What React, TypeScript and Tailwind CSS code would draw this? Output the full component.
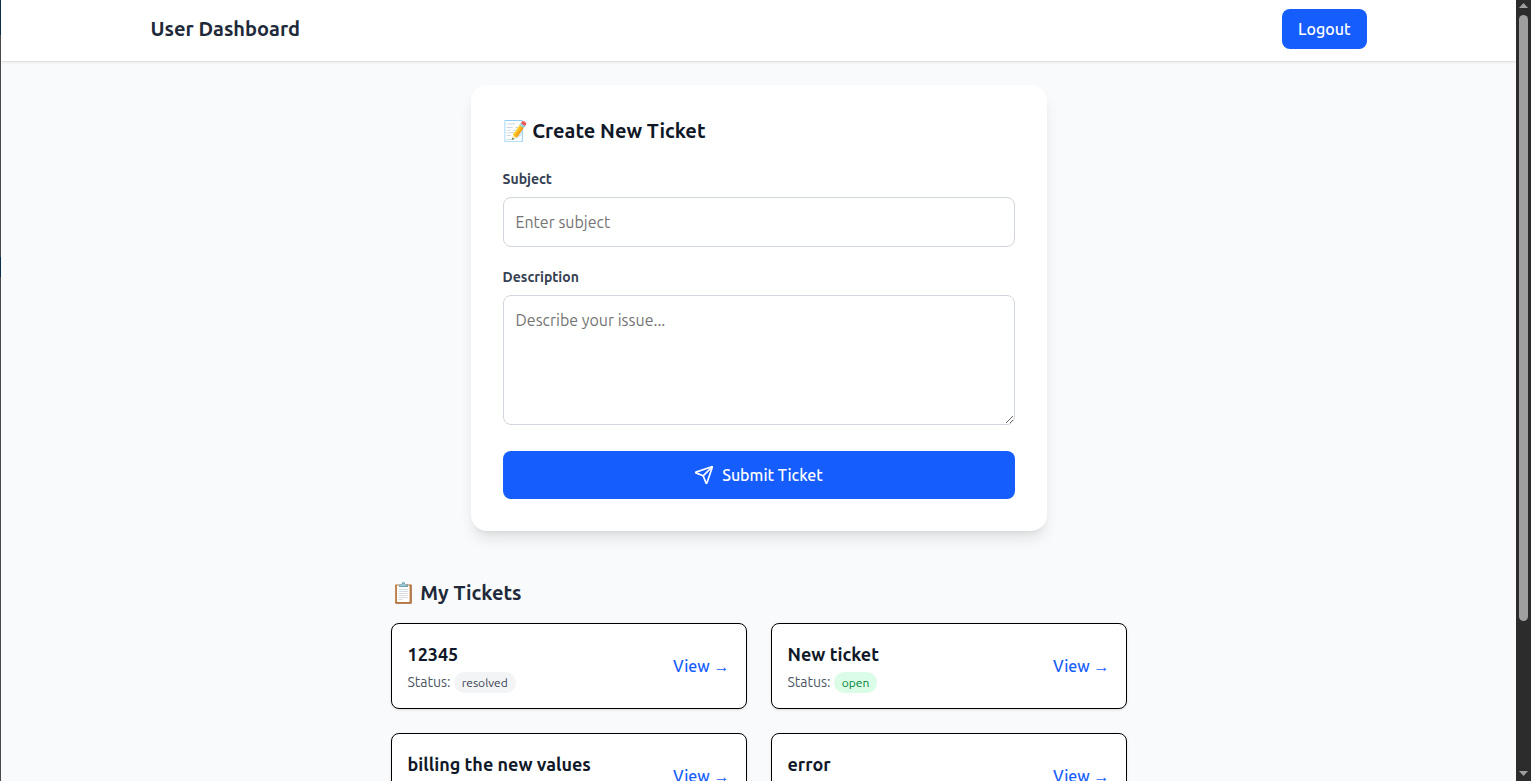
import { Send } from 'lucide-react';
import { clsx } from 'clsx';

type Ticket = { id: number; subject: string; status: 'open' | 'resolved' };

const tickets: Ticket[] = [
  { id: 1, subject: '12345', status: 'resolved' },
  { id: 2, subject: 'New ticket', status: 'open' },
  { id: 3, subject: 'billing the new values', status: 'open' },
  { id: 4, subject: 'error', status: 'open' },
];

function Header() {
  return (
    <header className="relative shrink-0 bg-white shadow-sm">
      <div className="mx-auto flex max-w-7xl items-start justify-between px-8 pt-[9px] pb-3">
        <h1 className="pt-1.5 text-xl font-semibold text-gray-800">User Dashboard</h1>
        <button type="button" className="rounded-lg bg-blue-600 px-4 py-2 font-medium text-white">
          Logout
        </button>
      </div>
    </header>
  );
}

function TicketForm() {
  return (
    <form
      onSubmit={(e) => e.preventDefault()}
      className="mx-auto w-full max-w-xl rounded-2xl bg-white p-8 shadow-lg"
    >
      <h2 className="mb-6 text-xl font-semibold text-gray-900">📝 Create New Ticket</h2>
      <div className="mb-5">
        <label htmlFor="subject" className="mb-2 block text-sm font-semibold text-gray-700">
          Subject
        </label>
        <input
          id="subject"
          type="text"
          placeholder="Enter subject"
          className="block w-full rounded-lg border border-gray-300 p-3 placeholder:text-[#757575]"
        />
      </div>
      <div className="mb-[26px]">
        <label htmlFor="description" className="mb-2 block text-sm font-semibold text-gray-700">
          Description
        </label>
        <textarea
          id="description"
          placeholder="Describe your issue..."
          className="block h-[130px] w-full resize-y rounded-lg border border-gray-300 p-3 placeholder:text-[#757575]"
        />
      </div>
      <button
        type="submit"
        className="flex w-full items-center justify-center gap-2 rounded-lg bg-blue-600 py-3 font-medium text-white"
      >
        <Send size={20} aria-hidden="true" />
        Submit Ticket
      </button>
    </form>
  );
}

function TicketCard({ ticket }: { ticket: Ticket }) {
  return (
    <li className="flex items-center justify-between rounded-lg border border-black bg-white p-4 shadow-sm">
      <div>
        <h3 className="text-lg font-semibold text-gray-900">{ticket.subject}</h3>
        <p className="mt-1 text-sm text-gray-600">
          Status:{' '}
          <span
            className={clsx(
              'rounded-full px-2 py-1 text-xs',
              ticket.status === 'open' ? 'bg-green-100 text-green-700' : 'bg-gray-100 text-gray-700',
            )}
          >
            {ticket.status}
          </span>
        </p>
      </div>
      <a href={`#ticket-${ticket.id}`} className="font-medium text-blue-600">
        View →
      </a>
    </li>
  );
}

function WindowEdge() {
  return (
    <div aria-hidden="true" className="flex w-px shrink-0 flex-col bg-[#4a4a4c]">
      <div className="h-[35px] bg-[#0b2f4a]" />
      <div className="mt-[222px] h-5 bg-[#0b2f4a]" />
    </div>
  );
}

function Scrollbar() {
  return (
    <div
      aria-hidden="true"
      className="flex w-[15px] shrink-0 flex-col items-center bg-[#2c2c2c] text-[#9f9f9f]"
    >
      <svg width="9" height="15" viewBox="0 0 9 15" fill="currentColor">
        <path d="M4.5 3 9 8H0z" />
      </svg>
      <div className="w-full flex-1 px-[3px]">
        <div className="h-[606px] max-h-full rounded-full bg-[#9f9f9f]" />
      </div>
      <svg width="9" height="15" viewBox="0 0 9 15" fill="currentColor">
        <path d="M0 5h9L4.5 10z" />
      </svg>
    </div>
  );
}

export default function App() {
  return (
    <div className="flex h-screen overflow-hidden font-['Ubuntu','Noto_Sans',sans-serif]">
      <WindowEdge />
      <div className="flex min-w-0 flex-1 flex-col overflow-hidden bg-gray-50">
        <Header />
        <main className="pt-6">
          <TicketForm />
          <section className="mx-auto mt-12 max-w-3xl px-4 pb-8">
            <h2 className="mb-4 text-xl font-semibold text-gray-800">📋 My Tickets</h2>
            <ul className="grid grid-cols-2 gap-6">
              {tickets.map((ticket) => (
                <TicketCard key={ticket.id} ticket={ticket} />
              ))}
            </ul>
          </section>
        </main>
      </div>
      <Scrollbar />
    </div>
  );
}
